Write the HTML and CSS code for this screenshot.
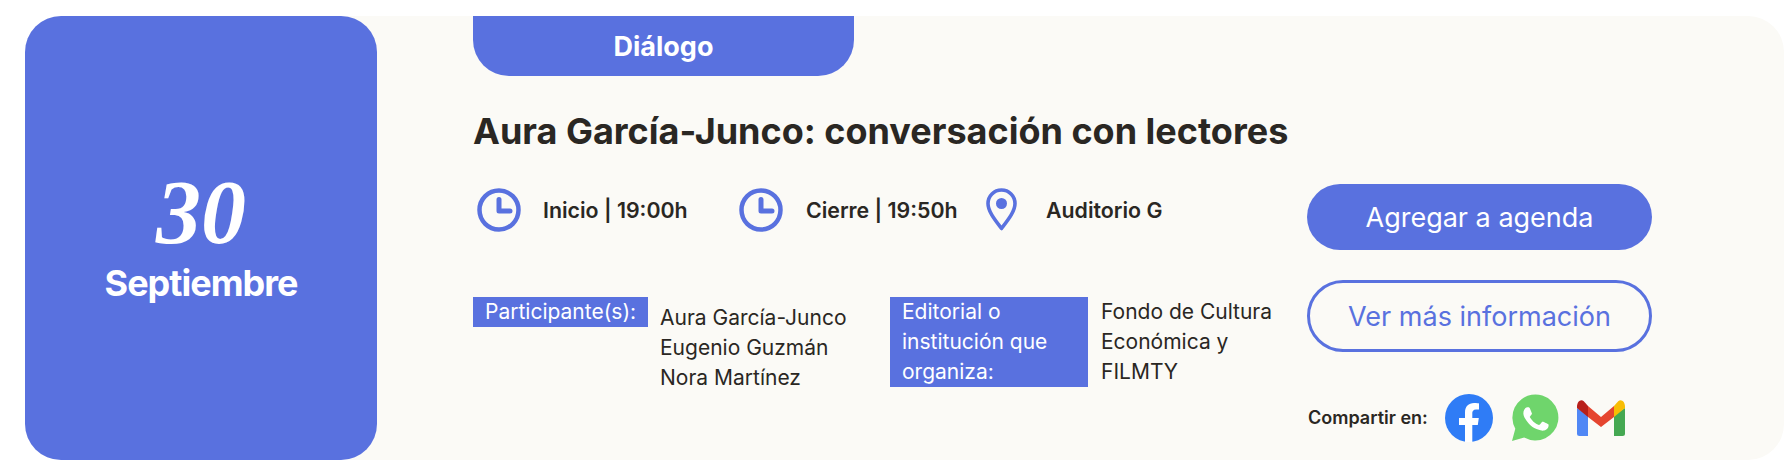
FILE: index.html
```html
<!DOCTYPE html>
<html lang="es">
<head>
    <meta charset="UTF-8">
    <meta name="viewport" content="width=device-width, initial-scale=1.0">
    <title>Aura García-Junco: conversación con lectores</title>
    <link rel="stylesheet" href="styles.css">
</head>
<body>
    <div class="event-card">
        <div class="event-date">
            <span class="day">30</span>
            <span class="month">Septiembre</span>
        </div>
        <div class="event-body">
            <div class="event-tab">Diálogo</div>
            <h2 class="event-title">Aura García-Junco: conversación con lectores</h2>
            <div class="event-details">
                <div class="event-info">
                    <div class="meta-row">
                        <div class="meta-item meta-start">
                            <svg class="meta-icon" viewBox="0 0 44 44" aria-hidden="true">
                                <circle cx="22" cy="22" r="19.5" fill="none" stroke="#5971df" stroke-width="4.5"/>
                                <path d="M22 11.500V23h11" fill="none" stroke="#5971df" stroke-width="5" stroke-linecap="round" stroke-linejoin="round"/>
                            </svg>
                            <span>Inicio | 19:00h</span>
                        </div>
                        <div class="meta-item meta-end">
                            <svg class="meta-icon" viewBox="0 0 44 44" aria-hidden="true">
                                <circle cx="22" cy="22" r="19.5" fill="none" stroke="#5971df" stroke-width="4.5"/>
                                <path d="M22 11.500V23h11" fill="none" stroke="#5971df" stroke-width="5" stroke-linecap="round" stroke-linejoin="round"/>
                            </svg>
                            <span>Cierre | 19:50h</span>
                        </div>
                        <div class="meta-item meta-place">
                            <svg class="pin-icon" viewBox="0 0 31 44" aria-hidden="true">
                                <path d="M15.5 2C8 2 2 8 2 15.5c0 8 7 16.500 13.500 25 6.500-8.500 13.500-17 13.500-25C29 8 23 2 15.500 2z" fill="none" stroke="#5971df" stroke-width="3.600" stroke-linejoin="round"/>
                                <circle cx="15.500" cy="15.500" r="5.500" fill="#5971df"/>
                            </svg>
                            <span>Auditorio G</span>
                        </div>
                    </div>
                    <div class="credits">
                        <div class="credit credit-people">
                            <div class="credit-label">Participante(s):</div>
                            <div class="credit-names">Aura García-Junco<br>Eugenio Guzmán<br>Nora Martínez</div>
                        </div>
                        <div class="credit credit-org">
                            <div class="credit-label">Editorial o institución que organiza:</div>
                            <div class="credit-text">Fondo de Cultura Económica y FILMTY</div>
                        </div>
                    </div>
                </div>
                <div class="event-actions">
                    <a class="btn btn-solid" href="#">Agregar a agenda</a>
                    <a class="btn btn-outline" href="#">Ver más información</a>
                    <div class="share">
                        <span class="share-label">Compartir en:</span>
                        <svg class="share-icon" viewBox="0 0 48 48" aria-label="Facebook">
                            <circle cx="24" cy="24" r="24" fill="#2f7cf6"/>
                            <path d="M20 48V31h-6v-7h6v-5.500C20 12.500 23.600 9 29 9c2.600 0 5 .4 5 .4v6h-2.900c-2.900 0-3.800 1.800-3.800 3.700V24h6.500l-1 7h-5.500v17c-2.700.4-5.500.4-7.800 0z" fill="#fff"/>
                        </svg>
                        <svg class="share-icon" viewBox="0 0 48 48" aria-label="WhatsApp">
                            <path d="M1 47l3.300-12.300A23 23 0 1 1 13.200 43.600z" fill="#6fd56c"/>
                            <path d="M17.300 11.500c-.6-1.300-1.200-1.300-1.800-1.300h-1.600c-.6 0-1.400.2-2.200 1-.7.800-2.800 2.800-2.800 6.700s2.900 7.800 3.300 8.300c.4.500 5.600 8.900 13.800 12.100 6.800 2.700 8.200 2.200 9.700 2 1.500-.1 4.800-2 5.400-3.900.7-1.900.7-3.500.5-3.900-.2-.3-.7-.5-1.500-.9-.8-.4-4.800-2.400-5.500-2.600-.7-.3-1.300-.4-1.800.4-.5.8-2.100 2.600-2.600 3.200-.5.500-.9.600-1.700.2-.8-.4-3.400-1.300-6.500-4-2.400-2.100-4-4.800-4.500-5.600-.5-.8 0-1.200.4-1.600.4-.4.800-.9 1.200-1.400.4-.5.500-.8.800-1.300.3-.5.100-1-.1-1.400-.2-.4-1.700-4.500-2.500-6z" fill="#fff" transform="translate(5.500 5.500) scale(.77)"/>
                        </svg>
                        <svg class="share-icon" viewBox="0 1 48 48" aria-label="Gmail">
                            <path d="M0 15v25.500A2.500 2.500 0 0 0 2.500 43H11V22z" fill="#5087f5"/>
                            <path d="M37 22v21h8.500a2.500 2.500 0 0 0 2.500-2.500V15z" fill="#45a852"/>
                            <path d="M0 13.500V15l11 9V13L6.800 8.300C3.800 5.200 0 8.800 0 13.500z" fill="#b81f1a"/>
                            <path d="M11 13v11l13 10 13-10V13L24 24z" fill="#e5452f"/>
                            <path d="M37 13v11l11-9v-1.500c0-4.700-3.800-8.300-6.800-5.200z" fill="#f8bd04"/>
                        </svg>
                    </div>
                </div>
            </div>
        </div>
    </div>
</body>
</html>
```

FILE: styles.css
```css
body {
    margin: 0;
    padding: 16px 0 3px 25px;
    font-family: Inter, Arial, sans-serif;
    background-color: #fff;
    color: #2a2723;
}

.event-card {
    display: flex;
    height: 444px;
    background-color: #fbfaf6;
    border-radius: 36px;
}

.event-date {
    width: 352px;
    flex-shrink: 0;
    display: flex;
    flex-direction: column;
    align-items: center;
    justify-content: center;
    background-color: #5971df;
    border-radius: 36px;
    color: #fff;
}

.day {
    font-family: "Liberation Serif", serif;
    font-style: italic;
    font-weight: 700;
    font-size: 90px;
    line-height: 90px;
}

.month {
    font-size: 36px;
    font-weight: 700;
    line-height: 50px;
    letter-spacing: -1px;
}

.event-body {
    padding-left: 96px;
}

.event-tab {
    width: 381px;
    height: 60px;
    display: flex;
    align-items: center;
    justify-content: center;
    background-color: #5971df;
    border-radius: 0 0 36px 36px;
    color: #fff;
    font-size: 27px;
    font-weight: 700;
}

.event-title {
    margin: 32px 0 30px;
    font-size: 36px;
    font-weight: 700;
    line-height: 46px;
}

.event-details {
    display: flex;
}

.event-info {
    width: 834px;
}

.meta-row {
    display: flex;
    padding-top: 4px;
    font-size: 21.33px;
    font-weight: 600;
}

.meta-item {
    display: flex;
    align-items: center;
}

.meta-start {
    width: 266px;
    padding-left: 4px;
    box-sizing: border-box;
}

.meta-end {
    width: 247px;
}

.meta-icon {
    width: 44px;
    height: 44px;
    margin-right: 22px;
}

.meta-end .meta-icon {
    margin-right: 23px;
}

.pin-icon {
    width: 31px;
    height: 44px;
    margin-right: 29px;
}

.credits {
    display: flex;
    margin-top: 65px;
    font-size: 21px;
    line-height: 30px;
}

.credit {
    display: flex;
    align-items: flex-start;
}

.credit-people {
    width: 417px;
}

.credit-org {
    width: 417px;
}

.credit-label {
    box-sizing: border-box;
    padding: 0 12px;
    background-color: #5971df;
    color: #fff;
    flex-shrink: 0;
}

.credit-people .credit-label {
    width: 175px;
}

.credit-org .credit-label {
    width: 198px;
}

.credit-names {
    margin: 6px 0 0 12px;
}

.credit-text {
    margin-left: 13px;
    width: 190px;
}

.event-actions {
    width: 345px;
}

.btn {
    display: flex;
    align-items: center;
    justify-content: center;
    box-sizing: border-box;
    border-radius: 36px;
    font-size: 27px;
    text-decoration: none;
}

.btn-solid {
    height: 66px;
    background-color: #5971df;
    color: #fff;
}

.btn-outline {
    height: 72px;
    margin-top: 30px;
    border: 3px solid #5971df;
    color: #5971df;
}

.share {
    display: flex;
    align-items: center;
    margin-top: 42px;
}

.share-label {
    width: 137px;
    padding: 0 0 2px 1px;
    font-size: 18px;
    font-weight: 600;
}

.share-icon {
    width: 48px;
    height: 48px;
    margin-right: 18px;
}
```
